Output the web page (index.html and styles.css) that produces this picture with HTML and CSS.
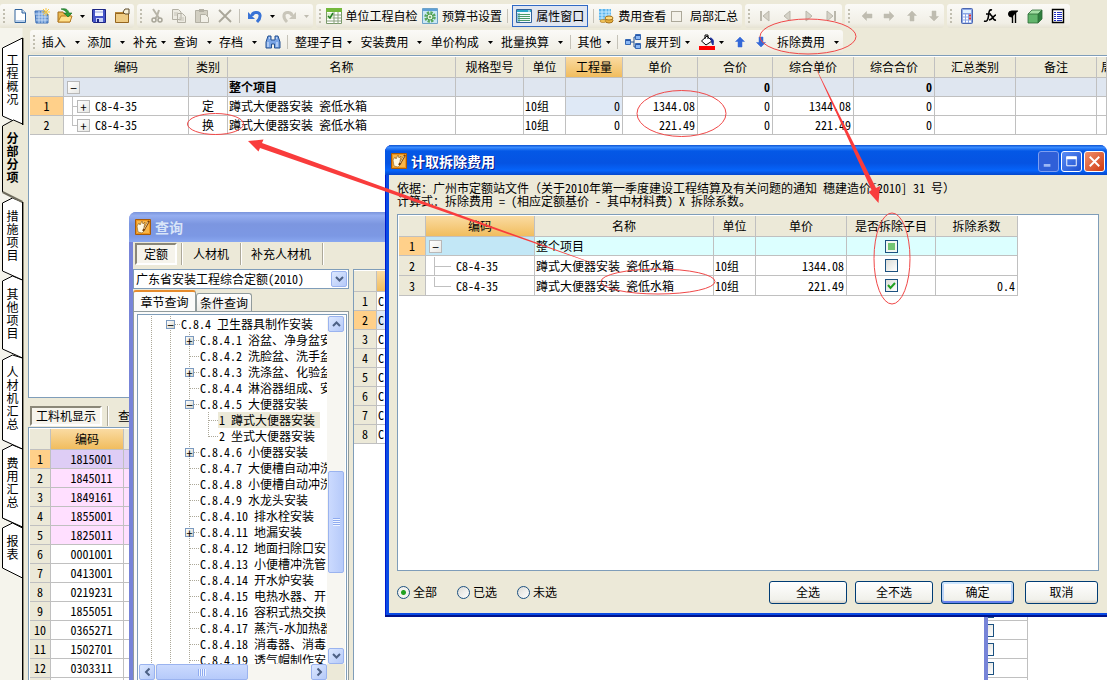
FILE: index.html
```html
<!DOCTYPE html>
<html lang="zh-CN">
<head>
<meta charset="utf-8">
<title>计取拆除费用</title>
<link rel="stylesheet" href="styles.css">
</head>
<body>
<svg class="defs" aria-hidden="true">
  <defs>
    <symbol id="down" viewBox="0 0 5 3"><path d="M0 0h5L2.500 3z" fill="currentColor"/></symbol>
    <symbol id="new" viewBox="0 0 16 16"><path d="M3 1.500h7l3.500 3.500v9.500H3z" fill="#fff" stroke="#31639c"/><path d="M10 1.500V5h3.500" fill="#cfe0f5" stroke="#31639c"/><path d="M4 13h9" stroke="#b8cfec" stroke-width="2"/></symbol>
    <symbol id="sheet" viewBox="0 0 16 16"><path d="M1 3h10l3 3v9H2z" fill="#6f9bd6" stroke="#3d6fb5"/><path d="M1 6h12M2 9h12M2 12h12M5 3v12M8 3v12M11 4v11" stroke="#d5e6fa" stroke-width=".8"/><path d="M12 0v8M8 4h8M9 1l6 6M15 1L9 7" stroke="#f4c542"/></symbol>
    <symbol id="open" viewBox="0 0 16 16"><path d="M1 14V4h5l1 2h6v8z" fill="#e8b850" stroke="#a36d1a"/><path d="M1 14l3-6h11l-2 6z" fill="#ffe08a" stroke="#b87d20"/><path d="M4 1c4-1 7 0 8 4h3l-4 4-4-4h3C9 3 7 2 4 1z" fill="#2f9e3a" stroke="#14691f" stroke-width=".6"/></symbol>
    <symbol id="save" viewBox="0 0 16 16"><path d="M1.500 1.500h13v13h-12l-1-1z" fill="#4655c8" stroke="#1c2584"/><path d="M4 2h8v6H4z" fill="#f4f6ff"/><path d="M4 4h8" stroke="#9aa8e0"/><path d="M5 10h7v4H5z" fill="#c9d2f7"/><path d="M6 11h2v3H6z" fill="#1c2584"/></symbol>
    <symbol id="folder" viewBox="0 0 16 16"><path d="M1 4h8v10H1z" fill="#b98a3c"/><path d="M1.500 5.500h13v9h-13z" fill="#eecb83" stroke="#94651f"/><path d="M9 4l2-3h4v5h-4z" fill="#f8f2da" stroke="#5d4a2a"/></symbol>
    <symbol id="cut" viewBox="0 0 16 16"><path d="M4 1l6 9M10 2L8 8 6 11" stroke="#b8b5a8" stroke-width="2" fill="none"/><circle cx="5" cy="12" r="2" fill="none" stroke="#a8a598" stroke-width="1.500"/><circle cx="11" cy="12" r="2" fill="none" stroke="#a8a598" stroke-width="1.500"/></symbol>
    <symbol id="copy" viewBox="0 0 16 16"><path d="M1.500 1.500h6L10 4v7.500H1.500zM6.500 5.500h5l3 3v6h-8z" fill="#edebe2" stroke="#b3b0a4"/><path d="M3 5h4M3 7h3M8 10h5M8 12h5" stroke="#c5c2b6"/></symbol>
    <symbol id="paste" viewBox="0 0 16 16"><path d="M1.500 2.500h12v12h-12z" fill="#d2cfc2" stroke="#b3b0a4"/><path d="M5 1h5v3H5z" fill="#b3b0a4"/><path d="M6.500 6.500h5l3 3v5h-8z" fill="#f2f0e8" stroke="#b3b0a4"/></symbol>
    <symbol id="cross" viewBox="0 0 16 16"><path d="M2 2l12 12M14 2L2 14" stroke="#aaa79a" stroke-width="1.800"/></symbol>
    <symbol id="undo" viewBox="0 0 16 16"><path d="M5 8c0-4 7-5 8-1 .5 3-1 5-3 7" fill="none" stroke="#3973d6" stroke-width="3"/><path d="M1 4v7h7z" fill="#3973d6"/></symbol>
    <symbol id="redo" viewBox="0 0 16 16"><path d="M11 8C11 4 4 3 3 7c-.5 3 1 5 3 7" fill="none" stroke="#c9c6ba" stroke-width="3"/><path d="M15 4v7H8z" fill="#c9c6ba"/></symbol>
    <symbol id="check" viewBox="0 0 16 16"><path d="M.5.5h15v15H.5z" fill="#fff" stroke="#7a9a6a"/><path d="M0 0h16v4H0z" fill="#74b83c"/><path d="M1 7h14M1 10h14M1 13h14M8 4v12M12 4v12" stroke="#8ba17e"/><path d="M1 5h6v6H1z" fill="#dff0cf"/><path d="M2 8l2 2 3-5" fill="none" stroke="#1f7d1f" stroke-width="1.500"/></symbol>
    <symbol id="gear" viewBox="0 0 16 16"><path d="M.5.5h15v15H.5z" fill="#c9e8f5" stroke="#6ea3c8"/><path d="M1 1h14v2H1z" fill="#5ea0d8"/><circle cx="8" cy="9" r="4.500" fill="none" stroke="#58a85b" stroke-width="2.500" stroke-dasharray="2.300 1.200"/><circle cx="8" cy="9" r="3" fill="#dff0d8" stroke="#4b994f"/><circle cx="8" cy="9" r="1" fill="#4b994f"/></symbol>
    <symbol id="window" viewBox="0 0 16 16"><path d="M.5 1.500h15v13H.5z" fill="#f4fbff" stroke="#31639c"/><path d="M1 2h14v2H1z" fill="#2aa6c8"/><path d="M1 5h3v9H1z" fill="#8fc6dd"/><path d="M2 6.500h12M2 8.500h12M2 10.500h12M2 12.500h12" stroke="#4d9a68"/><path d="M12 3h2" stroke="#fff"/></symbol>
    <symbol id="cost" viewBox="0 0 16 16"><path d="M1 1h12v11H1z" fill="#5cb4ec"/><path d="M1 4h12M1 7h12M1 10h12M4 1v11M8 1v11M11 1v11" stroke="#c9ecff"/><ellipse cx="11" cy="12.500" rx="4" ry="2.500" fill="#e8b13c" stroke="#a5711b"/><ellipse cx="11" cy="10" rx="4" ry="2" fill="#ffdb7c" stroke="#a5711b"/><ellipse cx="5" cy="13" rx="3" ry="1.500" fill="#f3c65c" stroke="#a5711b" stroke-width=".6"/></symbol>
    <symbol id="first" viewBox="0 0 14 14"><path d="M3 2v10" stroke="#bab7ab" stroke-width="2"/><path d="M11 2v10L5 7z" fill="#d5d2c7" stroke="#bab7ab"/></symbol>
    <symbol id="prev" viewBox="0 0 14 14"><path d="M10 2v10L4 7z" fill="#d5d2c7" stroke="#bab7ab"/></symbol>
    <symbol id="next" viewBox="0 0 14 14"><path d="M4 2v10l6-5z" fill="#d5d2c7" stroke="#bab7ab"/></symbol>
    <symbol id="last" viewBox="0 0 14 14"><path d="M11 2v10" stroke="#bab7ab" stroke-width="2"/><path d="M3 2v10l6-5z" fill="#d5d2c7" stroke="#bab7ab"/></symbol>
    <symbol id="up" viewBox="0 0 12 12"><path d="M6 1l4.500 4.500H8V11H4V5.500H1.500z" fill="currentColor" stroke="currentColor" stroke-width=".5"/></symbol>
    <symbol id="calc" viewBox="0 0 16 16"><rect x="2.500" y=".5" width="11" height="15" rx="1" fill="#8ba6e6" stroke="#4b66b0"/><path d="M4 2h8v3H4z" fill="#dff0ff"/><path d="M4 7.500h8M4 10.500h8M4 13.500h8" stroke="#fff" stroke-width="2" stroke-dasharray="2 1"/><path d="M10 7.500h2M10 10.500h2" stroke="#d33" stroke-width="2"/></symbol>
    <symbol id="fx" viewBox="0 0 16 16"><path d="M10 2C7 1 7 4 6.500 8S5 14 2 13M4 6h5M8 7c3-1 2 6 6 5M14 7c-2 0-4 5-7 5" fill="none" stroke="#000" stroke-width="1.600"/></symbol>
    <symbol id="para" viewBox="0 0 16 16"><path d="M14 3H7.500a3 3 0 0 0 0 6H8" fill="#000" stroke="#000"/><path d="M8.500 3v12M11.500 3v12" stroke="#000" stroke-width="1.400"/></symbol>
    <symbol id="cube" viewBox="0 0 16 16"><path d="M1 6l4-4h10l-4 4z" fill="#a5dfa5"/><path d="M11 6l4-4v9l-4 4z" fill="#2d7d3d"/><path d="M1 6h10v9H1z" fill="#62b56c"/><path d="M1 6l4-4h10v9l-4 4H1zM1 6h10v9M11 6l4-4" fill="none" stroke="#2b6b36" stroke-width=".8"/></symbol>
    <symbol id="list" viewBox="0 0 16 16"><path d="M2.500 1.500h11v13h-11z" fill="#fff" stroke="#000" stroke-width="1.400"/><path d="M4 4.500h2M7 4.500h5M4 6.500h2M7 6.500h5M4 8.500h2M7 8.500h5M4 10.500h2M7 10.500h5M4 12.500h2M7 12.500h5" stroke="#2030c0"/></symbol>
    <symbol id="find" viewBox="0 0 16 16"><path d="M3 2h3v4h4V2h3l2 6v6H9.500v-4h-3v4H1V8z" fill="#7aa5e6" stroke="#24508f"/><path d="M3 8v5M12 8v5" stroke="#e2efff"/><path d="M4 4h1M11 4h1" stroke="#fff"/></symbol>
    <symbol id="tree" viewBox="0 0 16 16"><path d="M6 8h3M9 3v10M9 3h2M9 13h2" stroke="#24508f" fill="none"/><path d="M.5 5.500h5v5h-5zM10.500.5h5v5h-5zM10.500 9.500h5v5h-5z" fill="#8bb8f5" stroke="#3468b5"/><path d="M1 6.500h4M11 1.500h4M11 10.500h4" stroke="#2856a8"/></symbol>
    <symbol id="fill" viewBox="0 0 16 16"><path d="M0 12h16v4H0z" fill="red"/><path d="M2.500 7L8 2l5 5-6 4z" fill="#fff" stroke="#000"/><path d="M6 5V1h3v4" fill="none" stroke="#000"/><path d="M11 4c3 0 4 3 3 7-2-2-1-5-3-7z" fill="#1c2f9b" stroke="#1c2f9b"/></symbol>
    <symbol id="app" viewBox="0 0 16 16"><path d="M.5.5h15v15H.5z" fill="#f0971c" stroke="#a85a08"/><path d="M2 2h12v12H2z" fill="#f8b64a"/><path d="M2 7l2-3 1 2 2-4 1 3 2-2-1 5 1 3-3 3-4-1z" fill="#fff8e3" stroke="#8a5a1a" stroke-width=".6"/><path d="M14 2L8 12" stroke="#7a3f05" stroke-width="2"/><path d="M13 3L9 10" stroke="#fff3c4" stroke-width=".8"/></symbol>
    <symbol id="chev" viewBox="0 0 9 6"><path d="M1 1l3.500 3.500L8 1" fill="none" stroke="#4d6185" stroke-width="2"/></symbol>
  </defs>
</svg>

<div class="app">
  <header class="bar">
    <div class="group group-file">
      <i class="grip"></i>
      <button aria-label="新建"><svg class="icon"><use href="#new"/></svg></button>
      <button aria-label="新建表"><svg class="icon"><use href="#sheet"/></svg></button>
      <button aria-label="打开"><svg class="icon"><use href="#open"/></svg></button>
      <button aria-label="最近"><svg class="drop"><use href="#down"/></svg></button>
      <button aria-label="保存"><svg class="icon"><use href="#save"/></svg></button>
      <button aria-label="文件夹"><svg class="icon"><use href="#folder"/></svg></button>
    </div>
    <div class="group group-edit">
      <i class="grip"></i>
      <button aria-label="剪切"><svg class="icon"><use href="#cut"/></svg></button>
      <button aria-label="复制"><svg class="icon"><use href="#copy"/></svg></button>
      <button aria-label="粘贴"><svg class="icon"><use href="#paste"/></svg></button>
      <button aria-label="删除"><svg class="icon"><use href="#cross"/></svg></button>
      <i class="sep"></i>
      <button aria-label="撤销"><svg class="icon"><use href="#undo"/></svg></button>
      <button aria-label="撤销列表"><svg class="drop"><use href="#down"/></svg></button>
      <button aria-label="重做"><svg class="icon"><use href="#redo"/></svg></button>
      <button aria-label="重做列表"><svg class="drop off"><use href="#down"/></svg></button>
    </div>
    <div class="group group-view">
      <i class="grip"></i>
      <button class="tool"><svg class="icon"><use href="#check"/></svg>单位工程自检</button>
      <button class="tool"><svg class="icon"><use href="#gear"/></svg>预算书设置</button>
      <i class="sep"></i>
      <button class="tool tool-on"><svg class="icon"><use href="#window"/></svg>属性窗口</button>
      <i class="sep"></i>
      <button class="tool"><svg class="icon"><use href="#cost"/></svg>费用查看</button>
      <label class="partial"><input type="checkbox" class="flat">局部汇总</label>
    </div>
    <div class="group group-nav">
      <i class="grip"></i>
      <button aria-label="首条"><svg class="icon-m"><use href="#first"/></svg></button>
      <button aria-label="上一条"><svg class="icon-m"><use href="#prev"/></svg></button>
      <button aria-label="下一条"><svg class="icon-m"><use href="#next"/></svg></button>
      <button aria-label="末条"><svg class="icon-m"><use href="#last"/></svg></button>
    </div>
    <div class="group group-move">
      <i class="grip"></i>
      <button aria-label="左移"><svg class="icon-s off turn-left"><use href="#up"/></svg></button>
      <button aria-label="右移"><svg class="icon-s off turn-right"><use href="#up"/></svg></button>
      <button aria-label="上移"><svg class="icon-s off"><use href="#up"/></svg></button>
      <button aria-label="下移"><svg class="icon-s off flip"><use href="#up"/></svg></button>
    </div>
    <div class="group group-util">
      <i class="grip"></i>
      <button aria-label="计算器"><svg class="icon"><use href="#calc"/></svg></button>
      <button aria-label="函数"><svg class="icon"><use href="#fx"/></svg></button>
      <button aria-label="段落"><svg class="icon"><use href="#para"/></svg></button>
      <button aria-label="图形库"><svg class="icon"><use href="#cube"/></svg></button>
      <button aria-label="清单"><svg class="icon"><use href="#list"/></svg></button>
    </div>
  </header>

  <div class="body">
    <nav class="rail">
      <svg class="rail-shapes" viewBox="0 0 25 652" aria-hidden="true">
        <path d="M22.500 0h2.500v652h-2.500z" fill="#ece9d8"/>
        <g stroke="#000" fill="#fff">
          <path d="M22.500 427L2.500 422v68l20 9z"/>
          <path d="M22.500 421l-10-4-10 5v68l20 9z"/>
          <path d="M22.500 330l-10-3-10 5v80l20 9z"/>
          <path d="M22.500 252l-10-4-10 5v68l20 9z"/>
          <path d="M22.500 174l-10-4-10 5v68l20 9z"/>
          <path d="M22.500 10L2.500 20v68l20 9z"/>
          <path d="M22.500 500l-10-5-10 5v40l20 10z"/>
        </g>
        <path d="M25 96l-12-4-10.500 6v66L22 174l3 1z" fill="#ece9d8"/>
        <path d="M22.500 96l-9-4-11 6v66" fill="none" stroke="#000"/>
        <path d="M2.500 164l20 10" stroke="#6f6c5e" stroke-width="2"/>
        <path d="M22.500 10v87M22.500 174v478" stroke="#000" stroke-width="1"/>
        <path d="M23.500 10v87M23.500 174v478" stroke="#8f8c7c" stroke-width="1"/>
      </svg>
      <button>工程概况</button>
      <button class="current">分部分项</button>
      <button>措施项目</button>
      <button>其他项目</button>
      <button>人材机汇总</button>
      <button>费用汇总</button>
      <button>报表</button>
    </nav>

    <main class="work">
      <div class="bar bar-menu">
        <div class="group group-menu">
          <i class="grip"></i>
          <div class="menus menus-a">
            <button class="menu">插入<svg class="drop"><use href="#down"/></svg></button>
            <button class="menu">添加<svg class="drop"><use href="#down"/></svg></button>
            <button class="menu tight">补充<svg class="drop"><use href="#down"/></svg></button>
            <button class="menu">查询<svg class="drop"><use href="#down"/></svg></button>
            <button class="menu">存档<svg class="drop"><use href="#down"/></svg></button>
            <button aria-label="查找"><svg class="icon"><use href="#find"/></svg></button>
          </div>
          <i class="sep"></i>
          <div class="menus menus-b">
            <button class="menu tight">整理子目<svg class="drop"><use href="#down"/></svg></button>
            <button class="menu">安装费用<svg class="drop"><use href="#down"/></svg></button>
            <button class="menu">单价构成<svg class="drop"><use href="#down"/></svg></button>
            <button class="menu">批量换算<svg class="drop"><use href="#down"/></svg></button>
          </div>
          <i class="sep"></i>
          <button class="menu tight">其他<svg class="drop"><use href="#down"/></svg></button>
          <i class="sep"></i>
          <div class="menus menus-c">
            <button class="menu tight"><svg class="icon"><use href="#tree"/></svg>展开到<svg class="drop"><use href="#down"/></svg></button>
            <button class="menu tight" aria-label="填充色"><svg class="icon"><use href="#fill"/></svg><svg class="drop"><use href="#down"/></svg></button>
            <button aria-label="上移"><svg class="icon-s blue"><use href="#up"/></svg></button>
            <button aria-label="下移"><svg class="icon-s blue flip"><use href="#up"/></svg></button>
            <button class="menu">拆除费用<svg class="drop"><use href="#down"/></svg></button>
          </div>
        </div>
      </div>

      <section class="pane pane-main">
        <table class="grid">
          <colgroup><col class="w34"><col class="w125"><col class="w39"><col class="w228"><col class="w68"><col class="w42"><col class="w57"><col class="w75"><col class="w75"><col class="w81"><col class="w81"><col class="w81"><col class="w81"><col></colgroup>
          <thead><tr><th></th><th>编码</th><th>类别</th><th>名称</th><th>规格型号</th><th>单位</th><th class="hot">工程量</th><th>单价</th><th>合价</th><th>综合单价</th><th>综合合价</th><th>汇总类别</th><th>备注</th><th class="cut">局</th></tr></thead>
          <tbody>
            <tr class="total"><th></th><td><div class="node"><button class="fold" aria-label="折叠">−</button></div></td><td></td><td>整个项目</td><td></td><td></td><td></td><td></td><td class="num">0</td><td></td><td class="num">0</td><td></td><td></td><td></td></tr>
            <tr><th class="sel">1</th><td><div class="node"><i class="stem"></i><button class="fold" aria-label="展开">+</button><span>C8-4-35</span></div></td><td class="mid">定</td><td>蹲式大便器安装 瓷低水箱</td><td></td><td>10组</td><td class="num cell-on">0</td><td class="num">1344.08</td><td class="num">0</td><td class="num">1344.08</td><td class="num">0</td><td></td><td></td><td></td></tr>
            <tr><th>2</th><td><div class="node"><i class="stem stem-end"></i><button class="fold" aria-label="展开">+</button><span>C8-4-35</span></div></td><td class="mid">换</td><td>蹲式大便器安装 瓷低水箱</td><td></td><td>10组</td><td class="num">0</td><td class="num">221.49</td><td class="num">0</td><td class="num">221.49</td><td class="num">0</td><td></td><td></td><td></td></tr>
          </tbody>
        </table>
      </section>

      <div class="switch">
        <button class="pressed">工料机显示</button><i class="etch"></i><button>查</button>
      </div>

      <section class="pane pane-parts">
        <table class="grid parts">
          <colgroup><col class="w21"><col class="w73"><col class="w823"><col class="w81"></colgroup>
          <thead><tr><th></th><th class="hot">编码</th><th></th><th></th></tr></thead>
          <tbody>
            <tr class="pink first"><th class="sel">1</th><td class="part">1815001</td><td></td><td></td></tr>
            <tr class="pink"><th>2</th><td class="part">1845011</td><td></td><td></td></tr>
            <tr class="pink"><th>3</th><td class="part">1849161</td><td></td><td></td></tr>
            <tr class="pink"><th>4</th><td class="part">1855001</td><td></td><td></td></tr>
            <tr class="pink"><th>5</th><td class="part">1825011</td><td></td><td></td></tr>
            <tr><th>6</th><td class="part">0001001</td><td></td><td></td></tr>
            <tr><th>7</th><td class="part">0413001</td><td></td><td></td></tr>
            <tr><th>8</th><td class="part">0219231</td><td></td><td></td></tr>
            <tr><th>9</th><td class="part">1855051</td><td></td><td class="mid"><input type="checkbox" class="box" aria-label="1855051"></td></tr>
            <tr><th>10</th><td class="part">0365271</td><td></td><td class="mid"><input type="checkbox" class="box" aria-label="0365271"></td></tr>
            <tr><th>11</th><td class="part">1502701</td><td></td><td class="mid"><input type="checkbox" class="box" aria-label="1502701"></td></tr>
            <tr><th>12</th><td class="part">0303311</td><td></td><td class="mid"><input type="checkbox" class="box" aria-label="0303311"></td></tr>
            <tr><th></th><td></td><td></td><td></td></tr>
          </tbody>
        </table>
      </section>
    </main>
  </div>
</div>

<section class="win win-query">
  <h2 class="title title-idle"><svg class="icon"><use href="#app"/></svg>查询</h2>
  <div class="kinds">
    <button class="pressed">定额</button><i class="etch"></i><button>人材机</button><i class="etch"></i><button>补充人材机</button><i class="etch"></i>
  </div>
  <div class="split">
    <div class="side">
      <div class="combo">
        <select aria-label="定额库"><option>广东省安装工程综合定额(2010)</option></select>
        <span class="knob"><svg><use href="#chev"/></svg></span>
      </div>
      <div class="tabs"><button class="tab tab-on">章节查询</button><button class="tab">条件查询</button></div>
      <div class="page">
        <div class="treebox">
          <ul class="tree">
            <li><i class="v"></i><i class="v h"><button class="pm" aria-label="折叠">−</button></i><span>C.8.4 卫生器具制作安装</span></li>
            <li><i class="v"></i><i class="v"></i><i class="v h"><button class="pm" aria-label="展开">+</button></i><span>C.8.4.1 浴盆、净身盆安装</span></li>
            <li><i class="v"></i><i class="v"></i><i class="v h"></i><span>C.8.4.2 洗脸盆、洗手盆安装</span></li>
            <li><i class="v"></i><i class="v"></i><i class="v h"><button class="pm" aria-label="展开">+</button></i><span>C.8.4.3 洗涤盆、化验盆安装</span></li>
            <li><i class="v"></i><i class="v"></i><i class="v h"></i><span>C.8.4.4 淋浴器组成、安装</span></li>
            <li><i class="v"></i><i class="v"></i><i class="v h"><button class="pm" aria-label="折叠">−</button></i><span>C.8.4.5 大便器安装</span></li>
            <li><i class="v"></i><i class="v"></i><i class="v"></i><i class="v h"></i><span class="picked">1 蹲式大便器安装</span></li>
            <li><i class="v"></i><i class="v"></i><i class="v"></i><i class="v h end"></i><span>2 坐式大便器安装</span></li>
            <li><i class="v"></i><i class="v"></i><i class="v h"><button class="pm" aria-label="展开">+</button></i><span>C.8.4.6 小便器安装</span></li>
            <li><i class="v"></i><i class="v"></i><i class="v h"></i><span>C.8.4.7 大便槽自动冲洗水箱</span></li>
            <li><i class="v"></i><i class="v"></i><i class="v h"></i><span>C.8.4.8 小便槽自动冲洗水箱</span></li>
            <li><i class="v"></i><i class="v"></i><i class="v h"></i><span>C.8.4.9 水龙头安装</span></li>
            <li><i class="v"></i><i class="v"></i><i class="v h"></i><span>C.8.4.10 排水栓安装</span></li>
            <li><i class="v"></i><i class="v"></i><i class="v h"><button class="pm" aria-label="展开">+</button></i><span>C.8.4.11 地漏安装</span></li>
            <li><i class="v"></i><i class="v"></i><i class="v h"></i><span>C.8.4.12 地面扫除口安</span></li>
            <li><i class="v"></i><i class="v"></i><i class="v h"></i><span>C.8.4.13 小便槽冲洗管</span></li>
            <li><i class="v"></i><i class="v"></i><i class="v h"></i><span>C.8.4.14 开水炉安装</span></li>
            <li><i class="v"></i><i class="v"></i><i class="v h"></i><span>C.8.4.15 电热水器、开</span></li>
            <li><i class="v"></i><i class="v"></i><i class="v h"></i><span>C.8.4.16 容积式热交换</span></li>
            <li><i class="v"></i><i class="v"></i><i class="v h"></i><span>C.8.4.17 蒸汽-水加热器</span></li>
            <li><i class="v"></i><i class="v"></i><i class="v h"></i><span>C.8.4.18 消毒器、消毒</span></li>
            <li><i class="v"></i><i class="v"></i><i class="v h"></i><span>C.8.4.19 透气帽制作安</span></li>
          </ul>
          <div class="track track-v">
            <span class="knob"><svg class="flip"><use href="#chev"/></svg></span>
            <span class="space-top"></span>
            <span class="thumb thumb-v"></span>
            <span class="space"></span>
            <span class="knob"><svg><use href="#chev"/></svg></span>
          </div>
          <div class="track track-h">
            <span class="knob"><svg class="turn-right"><use href="#chev"/></svg></span>
            <span class="thumb thumb-h"></span>
            <span class="space"></span>
            <span class="knob"><svg class="turn-left"><use href="#chev"/></svg></span>
          </div>
          <span class="corner"></span>
        </div>
      </div>
    </div>
    <div class="right-list">
      <table class="grid">
        <colgroup><col class="w22"><col></colgroup>
        <thead><tr><th></th><th class="hot"></th></tr></thead>
        <tbody>
          <tr><th>1</th><td>C</td></tr><tr><th class="sel">2</th><td class="cell-on">C</td></tr><tr><th>3</th><td>C</td></tr><tr><th>4</th><td>C</td></tr>
          <tr><th>5</th><td>C</td></tr><tr><th>6</th><td>C</td></tr><tr><th>7</th><td>C</td></tr><tr><th>8</th><td>C</td></tr>
        </tbody>
      </table>
    </div>
  </div>
</section>

<section class="win win-fee">
  <div class="title">
    <svg class="icon"><use href="#app"/></svg><h1>计取拆除费用</h1>
    <div class="ctls">
      <button class="ctl ctl-min" aria-label="最小化"><svg viewBox="0 0 20 20"><path d="M5 14h7" stroke="#9db8f5" stroke-width="3"/></svg></button>
      <button class="ctl" aria-label="最大化"><svg viewBox="0 0 20 20"><path d="M5 5.500h10v9H5z" fill="none" stroke="#fff"/><path d="M4.500 6h11" stroke="#fff" stroke-width="3"/></svg></button>
      <button class="ctl ctl-close" aria-label="关闭"><svg viewBox="0 0 20 20"><path d="M5 5l10 10M15 5L5 15" stroke="#fff" stroke-width="2"/></svg></button>
    </div>
  </div>
  <div class="fee-body">
    <p class="basis">依据：广州市定额站文件（关于2010年第一季度建设工程结算及有关问题的通知 穗建造价[2010] 31 号）<br>计算式：拆除费用 = (相应定额基价 - 其中材料费) X 拆除系数。</p>
    <div class="sheet">
      <table class="grid fee">
        <colgroup><col class="w27"><col class="w109"><col class="w179"><col class="w42"><col class="w91"><col class="w89"><col class="w82"></colgroup>
        <thead><tr><th></th><th class="hot">编码</th><th>名称</th><th>单位</th><th>单价</th><th>是否拆除子目</th><th>拆除系数</th></tr></thead>
        <tbody>
          <tr class="cyan"><th class="sel">1</th><td class="cell-blue"><div class="node"><button class="fold" aria-label="折叠">−</button></div></td><td>整个项目</td><td></td><td></td><td class="mid"><input type="checkbox" class="box some" aria-label="整个项目"></td><td></td></tr>
          <tr><th>2</th><td><div class="node"><i class="stem stem-long"></i><span>C8-4-35</span></div></td><td>蹲式大便器安装 瓷低水箱</td><td>10组</td><td class="num">1344.08</td><td class="mid"><input type="checkbox" class="box" aria-label="第2行"></td><td></td></tr>
          <tr><th>3</th><td><div class="node"><i class="stem stem-long stem-end"></i><span>C8-4-35</span></div></td><td>蹲式大便器安装 瓷低水箱</td><td>10组</td><td class="num">221.49</td><td class="mid"><input type="checkbox" class="box" checked aria-label="第3行"></td><td class="num">0.4</td></tr>
        </tbody>
      </table>
    </div>
    <div class="actions">
      <label><input type="radio" name="scope" checked>全部</label>
      <label><input type="radio" name="scope">已选</label>
      <label><input type="radio" name="scope">未选</label>
      <span class="space"></span>
      <button class="push">全选</button>
      <button class="push">全不选</button>
      <button class="push push-s push-main">确定</button>
      <button class="push push-s">取消</button>
    </div>
  </div>
</section>

<svg class="marks" width="1107" height="680" viewBox="0 0 1107 680" aria-hidden="true">
  <g fill="none" stroke="#f04848" stroke-width="1">
    <ellipse cx="215.500" cy="124" rx="28" ry="10.500"/>
    <ellipse cx="681.500" cy="113.500" rx="44.500" ry="23"/>
    <ellipse cx="808" cy="36.500" rx="48" ry="17.500"/>
    <ellipse cx="658" cy="281.500" rx="57" ry="12.500"/>
    <ellipse cx="892" cy="258.500" rx="18" ry="45.500"/>
  </g>
  <g fill="#f93c3c">
    <path d="M812.500 61L876 188l4-2 -1.500 17-8-9 -2-2 3-2z"/>
    <path d="M620.500 273L260 148l-1.500 3.500L248 141l15.500-1.500-1.500 3.500z"/>
  </g>
</svg>
</body>
</html>
```
FILE: styles.css
```css
* { box-sizing: border-box; }
body {
  margin: 0;
  height: 100vh;
  overflow: hidden;
  background: #ece9d8;
  color: #000;
  font: 12px/16px "Noto Sans Mono CJK SC", "Noto Sans CJK SC", sans-serif;
}
button, input, select { font: inherit; color: inherit; margin: 0; }
button { border: 0; padding: 0; background: none; display: flex; align-items: center; white-space: nowrap; }
i { display: block; font-style: normal; }
h1, h2, p, ul { margin: 0; padding: 0; list-style: none; }
.defs { display: none; }
.icon { width: 16px; height: 16px; flex: none; display: block; }
.icon-m { width: 14px; height: 14px; display: block; }
.icon-s { width: 12px; height: 12px; display: block; }
.drop { width: 5px; height: 3px; flex: none; display: block; }
.off { color: #bfbcb0; }
.blue { color: #3468d8; }
.flip { transform: rotate(180deg); }
.turn-left { transform: rotate(-90deg); }
.turn-right { transform: rotate(90deg); }
.knob .turn-right { transform: rotate(90deg); }
.space { flex: 1; }

/* toolbars */
.app { display: flex; flex-direction: column; height: 100%; }
.bar { display: flex; gap: 3px; padding-top: 4px; height: 28px; flex: none; }
.group {
  display: flex;
  align-items: center;
  justify-content: space-between;
  padding: 0 4px 0 3px;
  height: 24px;
  border-radius: 3px;
  background: linear-gradient(#fbfaf7, #f1efe6 80%, #e6e3d3);
}
.group-file { width: 134px; }
.group-edit { width: 176px; }
.group-view { width: 426px; }
.group-nav { width: 97px; }
.group-move { width: 99px; }
.group-util { width: 123px; }
.grip { width: 2px; height: 15px; background: repeating-linear-gradient(#c1beb0 0 2px, transparent 2px 4px); }
.sep { width: 1px; height: 14px; background: #c5c2b8; }
.tool { gap: 4px; }
.tool-on { height: 22px; padding: 0 3px; border: 1px solid #316ac5; background: #e1e6f0; }
.partial { display: flex; align-items: center; gap: 8px; }
.flat { appearance: none; width: 11px; height: 11px; border: 1px solid #aca899; background: #f4f2ea; }
.bar-menu { padding: 2px 0 0 2px; height: 27px; background: #ece9d8; }
.group-menu { width: 813px; }
.menus { display: flex; justify-content: space-between; align-items: center; }
.menus-a { width: 239px; }
.menus-b { width: 268px; }
.menus-c { width: 214px; }
.menu { gap: 9px; }
.tight { gap: 4px; }

/* side tabs */
.body { display: flex; flex: 1; min-height: 0; }
.rail {
  position: relative;
  width: 25px;
  margin-right: 3px;
  padding: 25px 0 0 6px;
  display: flex;
  flex-direction: column;
  gap: 26px;
  overflow: hidden;
  background: #f5f4ec;
}
.rail-shapes { position: absolute; left: 0; top: 0; width: 25px; height: 652px; }
.rail button { position: relative; width: 13px; line-height: 13px; white-space: normal; word-break: break-all; }
.rail .current { font-weight: bold; }

/* data grids */
.work { flex: 1; min-width: 0; display: flex; flex-direction: column; }
.pane { background: #fff; border: 1px solid #7f9db9; border-right: 0; padding: 1px 0 0 1px; overflow: hidden; }
.pane-main { height: 343px; flex: none; }
.pane-parts { flex: 1; border-bottom: 0; }
.grid { table-layout: fixed; border-collapse: separate; border-spacing: 0; width: 100%; }
.grid th, .grid td {
  height: 19px;
  padding: 0 3px 0 1px;
  border: solid #c0c0c0;
  border-width: 0 1px 1px 0;
  line-height: 16px;
  text-align: left;
  white-space: nowrap;
  overflow: hidden;
}
.grid th { background: #ece9d8; font-weight: normal; text-align: center; padding: 0 1px; }
.grid thead th { height: 21px; }
.grid thead .hot { background: linear-gradient(#fadba2, #f1bd5e); }
.grid thead .cut { text-align: left; padding-left: 4px; }
.grid th.sel { background: #ffd08a; }
.grid .num { text-align: right; padding-right: 2px; }
.grid .mid { text-align: center; padding: 0; }
.grid .part { text-align: center; padding: 0 0 0 9px; }
.grid .cell-on { background: #dfe9f6; }
.grid .cell-blue { background: #c2e7f6; }
.total td { background: #dfe6f0; font-weight: bold; }
.cyan td { background: #dcffff; }
.pink td { background: #ffdfff; }
.pink.first td { background: #decdf5; }
.parts { width: 998px; }
.w21 { width: 21px; } .w22 { width: 23px; } .w27 { width: 27px; } .w34 { width: 34px; } .w39 { width: 39px; }
.w42 { width: 42px; } .w57 { width: 57px; } .w68 { width: 68px; } .w73 { width: 73px; } .w75 { width: 75px; }
.w81 { width: 81px; } .w82 { width: 82px; } .w89 { width: 89px; } .w91 { width: 91px; } .w109 { width: 109px; }
.w125 { width: 125px; } .w179 { width: 179px; } .w228 { width: 228px; } .w823 { width: 823px; }
.node { display: flex; align-items: center; height: 18px; padding-left: 2px; }
.node span { padding-left: 5px; }
.fold {
  width: 13px;
  height: 13px;
  justify-content: center;
  border: 1px solid #b8b8b8;
  background: linear-gradient(135deg, #fff, #e8e8e4);
  font-weight: normal;
  line-height: 11px;
}
.stem {
  width: 10px;
  height: 100%;
  background: linear-gradient(#c0c0c0, #c0c0c0) 5px 0 / 1px 100% no-repeat, linear-gradient(#c0c0c0, #c0c0c0) 5px 9px / 20px 1px no-repeat;
}
.stem-end { background-size: 1px 9px, 20px 1px; }
.stem-long { width: 22px; }
.box {
  appearance: none;
  display: block;
  width: 13px;
  height: 13px;
  margin: auto;
  border: 1px solid #1c5180;
  background: linear-gradient(135deg, #dcdcd7, #fff);
}
.box.some { background: #73c573; box-shadow: inset 0 0 0 2px #f2f7f0; }
.box:checked {
  background: url("data:image/svg+xml,%3Csvg xmlns='http://www.w3.org/2000/svg' viewBox='0 0 11 11'%3E%3Cpath d='M2 5l2.500 3L9 3' fill='none' stroke='%2321a121' stroke-width='2'/%3E%3C/svg%3E"), linear-gradient(135deg, #dcdcd7, #fff);
}

.switch, .kinds { display: flex; align-items: center; flex: none; }
.switch { height: 29px; padding: 6px 0 0 2px; }
.pressed {
  justify-content: center;
  border: 2px solid;
  border-color: #8a8778 #fff #fff #8a8778;
  background: #f6f4ec;
}
.switch .pressed { width: 72px; height: 20px; }
.etch { width: 2px; height: 20px; border-left: 1px solid #aca899; border-right: 1px solid #fff; }
.switch .etch { margin: 0 9px 0 5px; }

/* windows */
.win { position: absolute; display: flex; flex-direction: column; overflow: hidden; border-radius: 7px 7px 0 0; }
.title { display: flex; align-items: center; gap: 4px; color: #fff; font-size: 14px; font-weight: bold; flex: none; }
.title h1 { font: inherit; flex: 1; text-shadow: 1px 1px #0a1883; }
.win-query { left: 129px; top: 212px; bottom: 0; width: 859px; background: #7784d8; padding: 0 4px; }
.title-idle {
  height: 30px;
  margin: 0 -4px;
  padding-left: 6px;
  color: #d8e4f8;
  background: linear-gradient(#7a94dc, #95aef0 12%, #7c96e0 40%, #7c98e4 80%, #8aa8f0);
}
.kinds { height: 24px; padding-left: 2px; background: #ece9d8; }
.kinds .pressed { width: 42px; height: 22px; }
.kinds .etch { margin: 0 10px 0 4px; height: 22px; }
.kinds .etch ~ .etch { margin: 0 9px 0 11px; }
.split { flex: 1; min-height: 0; display: flex; gap: 4px; padding-top: 3px; background: #ece9d8; }
.side { width: 216px; display: flex; flex-direction: column; }
.combo { display: flex; height: 20px; flex: none; border: 1px solid #7f9db9; background: #fff; padding: 1px; }
.combo select { appearance: none; border: 0; background: none; padding: 0 0 0 1px; flex: 1; min-width: 0; outline: 0; }
.knob {
  flex: none;
  width: 16px;
  height: 16px;
  display: flex;
  align-items: center;
  justify-content: center;
  border: 1px solid #9ab3ef;
  border-radius: 2px;
  background: linear-gradient(135deg, #dce8ff, #b5c9f8);
}
.knob svg { width: 9px; height: 6px; }
.tabs { display: flex; align-items: flex-end; height: 22px; flex: none; }
.tab { justify-content: center; height: 18px; width: 56px; border: 1px solid #919b9c; border-bottom: 0; border-radius: 3px 3px 0 0; background: linear-gradient(#fff, #ecebe6); }
.tab-on { height: 21px; width: 63px; border-top: 2px solid #e68b2c; background: #fbfbfa; }
.page { flex: 1; min-height: 0; display: flex; padding: 2px 1px 0 3px; border: 1px solid #919b9c; border-bottom: 0; background: #fbfbfa; }
.treebox {
  flex: 1;
  display: grid;
  grid-template-columns: 1fr 18px;
  grid-template-rows: 1fr 16px;
  padding: 1px 1px 0;
  border: 1px solid #7f9db9;
  border-bottom: 0;
  background: #fff;
  min-height: 0;
}
.tree { overflow: hidden; padding-left: 3px; min-width: 0; }
.tree li { display: flex; height: 16px; white-space: nowrap; }
.tree i { position: relative; width: 19px; height: 16px; flex: none; }
.v { background: repeating-linear-gradient(#aca899 0 1px, transparent 1px 2px) 9px 0 / 1px 100% no-repeat; }
.end { background-size: 1px 9px; }
.h::after { content: ""; position: absolute; left: 10px; right: 0; top: 8px; border-top: 1px dotted #aca899; }
.pm {
  position: absolute;
  left: 5px;
  top: 4px;
  z-index: 1;
  width: 9px;
  height: 9px;
  justify-content: center;
  border: 1px solid #7b9ac0;
  background: linear-gradient(135deg, #fff, #d8d5c8);
  line-height: 7px;
}
.tree span { padding: 0 1px; }
.tree .picked { background: #ece9d8; padding-right: 5px; }
.track { display: flex; background: #f7f6f1; min-height: 0; min-width: 0; }
.track-v { flex-direction: column; padding: 0 0 0 1px; }
.space-top { flex: 0 0 139px; }
.thumb { border: 1px solid #9ab3ef; border-radius: 2px; flex: none; }
.thumb-v { width: 16px; height: 102px; background: repeating-linear-gradient(#8fabf0 0 1px, #eef4ff 1px 2px) center / 7px 8px no-repeat, linear-gradient(90deg, #cbdafe, #b6cafa); }
.thumb-h { width: 92px; height: 16px; margin-left: 1px; background: repeating-linear-gradient(90deg, #8fabf0 0 1px, #eef4ff 1px 2px) center / 8px 7px no-repeat, linear-gradient(#cbdafe, #b6cafa); }
.corner { background: #ece9d8; }
.right-list { flex: 1; min-width: 0; padding: 1px 0 0; border: 1px solid #7f9db9; border-width: 1px 0 0 1px; background: #fff; }

.win-fee { left: 385px; right: 0; top: 145px; height: 472px; background: #0a4be4; padding: 0 0 4px 4px; box-shadow: inset 0 -2px #00138c, inset 1px 0 #0019cf; }
.win-fee .title {
  height: 30px;
  margin-left: -4px;
  padding: 2px 2px 0 6px;
  background: linear-gradient(#0d53d0, #3a8cff 8%, #0458e6 20%, #0553e2 60%, #0664fa 85%, #0547cc);
}
.ctls { display: flex; gap: 2px; }
.ctl { width: 21px; height: 21px; border: 1px solid #fff; border-radius: 3px; background: linear-gradient(135deg, #5a8cf5, #1c4fd0); }
.ctl svg { width: 100%; height: 100%; }
.ctl-min { border-color: #7f9ff0; background: #2f5fd8; }
.ctl-close { background: linear-gradient(135deg, #f0906c, #cf3a12); }
.fee-body { flex: 1; min-height: 0; display: flex; flex-direction: column; padding: 6px 8px 0; background: #ece9d8; }
.basis { line-height: 13px; white-space: nowrap; }
.sheet { flex: 1; margin-top: 7px; padding: 1px; border: 1px solid #7f9db9; background: #fff; }
.fee { width: 619px; }
.fee tbody tr + tr td { height: 20px; }
.actions { display: flex; align-items: center; height: 42px; padding: 0 1px 0 0; gap: 8px; flex: none; }
.actions label { display: flex; align-items: center; gap: 3px; width: 52px; white-space: nowrap; }
.actions input {
  appearance: none;
  width: 13px;
  height: 13px;
  border: 1px solid #1c5180;
  border-radius: 50%;
  background: linear-gradient(135deg, #dcdcd7, #fff);
}
.actions input:checked { background: radial-gradient(circle, #21a121 0 2px, #f3f3ef 3px); }
.push {
  width: 78px;
  height: 23px;
  justify-content: center;
  border: 1px solid #003c74;
  border-radius: 3px;
  background: linear-gradient(#fff, #f0f0ea 85%, #d6d0c5);
}
.push-s { width: 73px; }
.push-s + .push-s { margin-left: 3px; }
.push-main { box-shadow: inset 0 2px #cee7ff, inset 0 -2px #6982ee, inset 2px 0 #bcd4f6, inset -2px 0 #bcd4f6; }

.marks { position: absolute; left: 0; top: 0; pointer-events: none; }
```
